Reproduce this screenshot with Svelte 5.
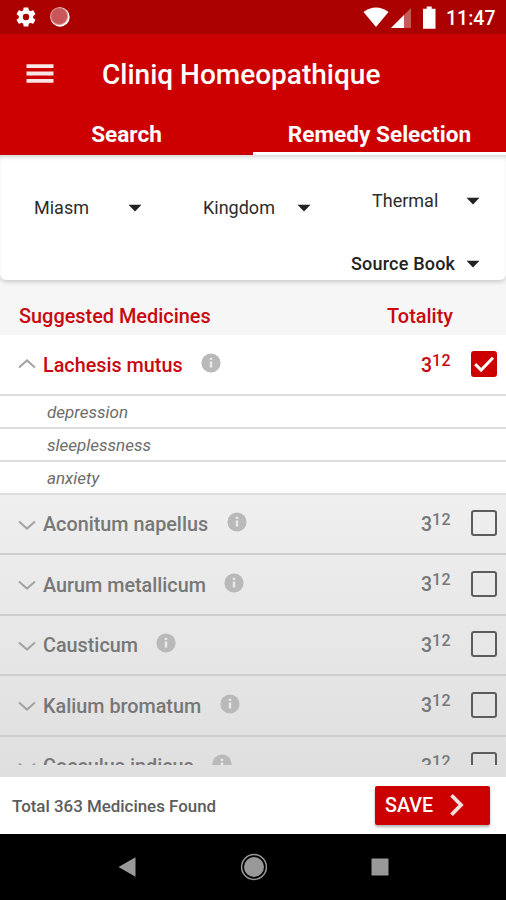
<script>
  const symptoms = ['depression', 'sleeplessness', 'anxiety'];
  const medicines = ['Aconitum napellus', 'Aurum metallicum', 'Causticum', 'Kalium bromatum', 'Cocculus indicus'];
  let checked = $state([false, false, false, false, false]);
  let first = $state(true);
</script>

{#snippet caret()}
  <svg class="caret" width="14" height="8" viewBox="0 0 14 8"><path d="M.5.7h13L7 7.4z" fill="#222" /></svg>
{/snippet}

{#snippet info()}
  <svg class="info" width="20" height="20" viewBox="0 0 20 20">
    <circle cx="10" cy="10" r="9.6" fill="currentColor" />
    <path d="M8.800 4.800h2.400v2.200H8.800zM8.800 8.600h2.400v6H8.800z" fill="#fff" fill-opacity=".7" />
  </svg>
{/snippet}

{#snippet row(name, on, toggle, open)}
  <div class="row" class:open>
    <svg class="chev" width="18" height="10" viewBox="0 0 18 10" fill="none" stroke="#a3a3a3" stroke-width="2">
      <path d={open ? 'M1 8.6 9 1.4l8 7.2' : 'M1 1.4l8 7.2 8-7.2'} />
    </svg>
    <span class="name">{name}</span>
    {@render info()}
    <span class="score">3<sup>12</sup></span>
    <button class="check" class:on onclick={toggle} aria-label={name}>
      {#if on}
        <svg width="22" height="20" viewBox="0 0 22 20"><path d="M2.2 10.1l5.900 6L20 3.800" fill="none" stroke="#fff" stroke-width="3" /></svg>
      {/if}
    </button>
  </div>
{/snippet}

<div class="screen">
  <div class="status">
    <svg class="gear" width="22" height="22" viewBox="1 1 22 22"><path fill="#fff" d="M19.14 12.94c.04-.3.06-.61.06-.94 0-.32-.02-.64-.07-.94l2.03-1.58a.49.49 0 0 0 .12-.61l-1.92-3.32a.49.49 0 0 0-.59-.22l-2.39.96c-.5-.38-1.03-.7-1.62-.94l-.36-2.54a.48.48 0 0 0-.48-.41h-3.84c-.24 0-.43.17-.47.41l-.36 2.54c-.59.24-1.13.57-1.62.94l-2.39-.96a.48.48 0 0 0-.59.22L2.74 8.87c-.12.21-.08.47.12.61l2.03 1.58c-.05.3-.09.63-.09.94s.02.64.07.94l-2.03 1.58a.49.49 0 0 0-.12.61l1.92 3.32c.12.22.37.29.59.22l2.39-.96c.5.38 1.03.7 1.62.94l.36 2.54c.05.24.24.41.48.41h3.84c.24 0 .44-.17.47-.41l.36-2.54c.59-.24 1.13-.56 1.62-.94l2.39.96c.22.08.47 0 .59-.22l1.92-3.32a.49.49 0 0 0-.12-.61zM12 15.2A3.2 3.2 0 1 1 12 8.8a3.2 3.2 0 0 1 0 6.4z" /></svg>
    <svg class="moon" width="20" height="20" viewBox="0 0 20 20"><circle cx="10" cy="10" r="9.7" fill="#fff" /><circle cx="9.200" cy="9.200" r="9" fill="#dc9496" /><circle cx="9.200" cy="9.200" r="7.900" fill="#c95658" /></svg>
    <svg class="signals" width="76" height="24" viewBox="0 0 76 24" fill="#fff">
      <path d="M.5 7C7.8.9 18.2.9 25.5 7L13 22z" />
      <path d="M48 3v20H28z" opacity=".35" />
      <path d="M41 10v13H28z" />
      <path d="M60 3.800h3.700V1.600h5v2.200H72.500v20H60z" />
    </svg>
    <span class="clock">11:47</span>
  </div>

  <header>
    <div class="bar">
      <svg width="28" height="22" viewBox="0 0 28 22" fill="#fff"><path d="M.5 1.200h27v3.900H.5zM.5 8.500h27v3.900H.5zM.5 15.900h27v3.900H.5z" opacity=".9" /></svg>
      <h1>Cliniq Homeopathique</h1>
    </div>
    <nav class="tabs">
      <div class="tab"><span>Search</span></div>
      <div class="tab active"><span>Remedy Selection</span></div>
    </nav>
  </header>

  <main>
    <section class="filters">
      <div class="line">
        <div class="select miasm"><span>Miasm</span>{@render caret()}</div>
        <div class="select kingdom"><span>Kingdom</span>{@render caret()}</div>
        <div class="select thermal"><span>Thermal</span>{@render caret()}</div>
      </div>
      <div class="select source"><span>Source Book</span>{@render caret()}</div>
    </section>

    <div class="heading"><span>Suggested Medicines</span><span>Totality</span></div>

    {@render row('Lachesis mutus', first, () => (first = !first), true)}
    <ul>
      {#each symptoms as s}<li>{s}</li>{/each}
    </ul>
    <div class="rest">
      <div class="clip">
        {#each medicines as m, i}
          {@render row(m, checked[i], () => (checked[i] = !checked[i]), false)}
        {/each}
      </div>
    </div>
  </main>

  <footer>
    <span class="total">Total 363 Medicines Found</span>
    <button class="save"><span>SAVE</span>
      <svg width="16" height="24" viewBox="0 0 16 24" fill="none" stroke="#fff" stroke-opacity=".88" stroke-width="3.800"><path d="M2.500 2.200l9.500 9.800-9.500 9.800" /></svg>
    </button>
  </footer>

  <div class="system">
    <svg width="18" height="20" viewBox="0 0 18 20"><path d="M.5 10L17.500.3v19.400z" fill="#999" /></svg>
    <svg width="28" height="28" viewBox="0 0 28 28"><circle cx="14" cy="14" r="12.400" fill="none" stroke="#999" stroke-width="1.500" /><circle cx="14" cy="14" r="10" fill="#999" /></svg>
    <svg width="18" height="18" viewBox="0 0 18 18"><path d="M.5.500h17v17H.5z" fill="#999" /></svg>
  </div>
</div>

<style>
  :global(body) { margin: 0; background: #000; }
  .screen { width: 506px; height: 900px; display: flex; flex-direction: column; overflow: hidden; font-family: Roboto, "Liberation Sans", sans-serif; background: #fff; }
  svg { display: block; flex: none; }
  button { font: inherit; padding: 0; }

  .status { height: 34px; flex: none; box-sizing: border-box; background: #aa0000; display: flex; align-items: center; padding: 0 11px 0 15px; color: #fff; }
  .gear { margin-top: 0; }
  .moon { margin-left: 13px; }
  .signals { margin-left: auto; margin-top: 0; }
  .clock { font-size: 19.500px; font-weight: 500; width: 49px; margin-left: 7px; margin-top: 2px; white-space: nowrap; }

  header { height: 121px; flex: none; background: #cc0000; color: #fff; }
  .bar { height: 80px; display: flex; align-items: center; padding-left: 26px; }
  h1 { margin: 1px 0 0 48px; font-size: 28px; font-weight: 500; line-height: 34px; white-space: nowrap; }
  .tabs { display: flex; height: 41px; }
  .tab { flex: 1; display: flex; justify-content: center; box-sizing: border-box; border-bottom: 3px solid transparent; font-size: 22.600px; font-weight: 700; line-height: 42px; white-space: nowrap; }
  .tab.active { border-color: #fff; }

  main { height: 622px; flex: none; background: #f6f6f6; display: flex; flex-direction: column; }
  .filters { height: 125px; flex: none; background: #fff; border-radius: 0 0 6px 6px; box-shadow: 0 2px 4px rgba(0,0,0,.18), inset 0 4px 4px -2px rgba(0,30,15,.18); color: #2c2c2c; font-size: 18px; }
  .line { display: flex; height: 90px; align-items: flex-start; }
  .select { display: flex; align-items: center; justify-content: space-between; line-height: 24px; box-sizing: border-box; white-space: nowrap; }
  .miasm { width: 108px; margin: 41px 0 0 34px; }
  .kingdom { width: 108px; margin: 41px 0 0 61px; }
  .thermal { width: 108px; margin: 34px 0 0 61px; }
  .select .caret { margin-top: -1px; }
  .source { width: 129px; margin: 7px 0 0 351px; font-weight: 500; color: #222; letter-spacing: .2px; }
  .heading { height: 55px; flex: none; display: flex; justify-content: space-between; padding: 0 53px 0 19px; line-height: 73px; color: #c80910; font-size: 19.900px; font-weight: 500; }

  .row { height: 60.5px; flex: none; box-sizing: border-box; border-bottom: 2px solid #cecece; display: flex; align-items: center; padding: 0 9px 0 18px; color: #777; }
  .row.open { height: 61px; background: #fff; color: #c80910; border-color: #ddd; }
  .chev { margin-top: 2px; }
  .open .chev { margin-top: -1px; }
  .name { margin-left: 7px; margin-top: 2px; font-size: 19.800px; font-weight: 500; white-space: nowrap; }
  .info { color: #b9b9b9; margin-left: 18.500px; margin-top: -3px; }
  .score { margin-left: auto; width: 50px; font-size: 19.500px; font-weight: 500; line-height: 24px; margin-top: 2px; white-space: nowrap; }
  sup { font-size: 16px; line-height: 0; vertical-align: 6.500px; letter-spacing: .3px; }
  .check { width: 26px; height: 26px; box-sizing: border-box; border: 2px solid #5c5c5c; border-radius: 3px; background: transparent; display: grid; place-items: center; margin-top: -1px; }
  .check.on { background: #cc0000; border-color: #cc0000; }
  ul { list-style: none; margin: 0; padding: 0; flex: none; background: #fff; }
  li { height: 33px; box-sizing: border-box; border-bottom: 2px solid #ddd; padding-left: 47px; font-size: 17px; line-height: 33px; font-style: italic; color: #6c6c6c; }
  li:last-child { height: 32.500px; }
  .rest { flex: 1; min-height: 0; background: linear-gradient(#efefef, #dfdfdf); }
  .clip { height: 270.500px; overflow: hidden; }

  footer { height: 57px; flex: none; box-sizing: border-box; background: #fff; display: flex; align-items: center; justify-content: space-between; padding: 0 16px 0 12px; }
  .total { font-size: 16.900px; font-weight: 500; color: #5c5c5c; margin-top: 1px; white-space: nowrap; }
  .save { width: 115px; height: 39px; border: 0; border-radius: 2px; background: #cc0000; box-shadow: 0 2px 3px rgba(0,0,0,.3); color: #fff; display: flex; align-items: center; padding: 0 0 0 10px; margin-top: -1px; font-size: 19.700px; font-weight: 500; }
  .save svg { margin-left: 16px; }
  .system { flex: 1; background: #000; display: flex; justify-content: space-between; align-items: center; padding: 0 117px 0 118px; }
</style>
